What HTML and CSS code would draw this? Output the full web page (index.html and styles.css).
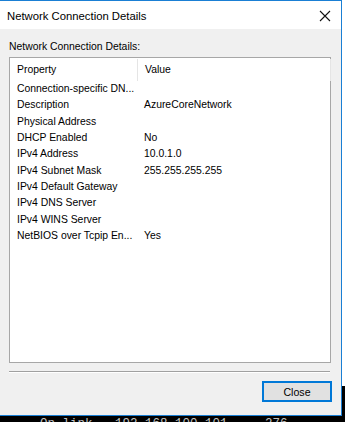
FILE: index.html
```html
<!DOCTYPE html>
<html lang="en">
<head>
  <meta charset="UTF-8" />
  <title>Network Connection Details</title>
  <link rel="stylesheet" href="styles.css">
</head>
<body>
  <div class="screen">
    <div class="top">
      <div class="dialog">
        <div class="titlebar">
          <span class="title">Network Connection Details</span>
          <svg class="close-x" width="12" height="12" viewBox="0 0 12 12">
            <path d="M1 1 L11 11 M11 1 L1 11" stroke="#111" stroke-width="1.1" fill="none"/>
          </svg>
        </div>
        <div class="body">
          <div class="label">Network Connection Details:</div>
          <div class="list">
            <div class="list-head">
              <div class="col-prop">Property</div>
              <div class="col-val">Value</div>
            </div>
            <div class="row"><div class="col-prop">Connection-specific DN...</div><div class="col-val"></div></div>
            <div class="row"><div class="col-prop">Description</div><div class="col-val">AzureCoreNetwork</div></div>
            <div class="row"><div class="col-prop">Physical Address</div><div class="col-val"></div></div>
            <div class="row"><div class="col-prop">DHCP Enabled</div><div class="col-val">No</div></div>
            <div class="row"><div class="col-prop">IPv4 Address</div><div class="col-val">10.0.1.0</div></div>
            <div class="row"><div class="col-prop">IPv4 Subnet Mask</div><div class="col-val">255.255.255.255</div></div>
            <div class="row"><div class="col-prop">IPv4 Default Gateway</div><div class="col-val"></div></div>
            <div class="row"><div class="col-prop">IPv4 DNS Server</div><div class="col-val"></div></div>
            <div class="row"><div class="col-prop">IPv4 WINS Server</div><div class="col-val"></div></div>
            <div class="row"><div class="col-prop">NetBIOS over Tcpip En...</div><div class="col-val">Yes</div></div>
          </div>
          <div class="separator"></div>
          <div class="buttons">
            <button class="btn">Close</button>
          </div>
        </div>
      </div>
      <div class="behind"></div>
    </div>
    <div class="console">On-link   192.168.100.101     276</div>
  </div>
</body>
</html>
```

FILE: styles.css
```css
body {
  margin: 0;
  font-family: 'Liberation Sans', Arial, sans-serif;
  color: #000;
}
.screen {
  width: 345px;
  height: 422px;
  overflow: hidden;
  background: #000;
  display: flex;
  flex-direction: column;
}
.top {
  display: flex;
  height: 416px;
  flex-shrink: 0;
}
.dialog {
  width: 341px;
  border-top: 1px solid #1a7fd4;
  border-right: 1px solid #1a7fd4;
  border-bottom: 1px solid #1a7fd4;
  background: #f0f0f0;
  display: flex;
  flex-direction: column;
}
.titlebar {
  height: 28px;
  background: #fff;
  display: flex;
  align-items: center;
  justify-content: space-between;
  padding: 0 10px 0 7px;
}
.title {
  font-size: 11.3px;
  padding-top: 1px;
}
.close-x {
  margin-top: 1px;
}
.body {
  flex: 1;
  padding: 11px 10px 0 9px;
  font-size: 10.4px;
}
.label {
  height: 14px;
  line-height: 14px;
  margin-bottom: 3px;
}
.list {
  height: 303px;
  padding-top: 1px;
  background: #fff;
  border: 1px solid #a7a7a7;
}
.list-head {
  display: flex;
  height: 22px;
  align-items: center;
}
.list-head .col-prop {
  border-right: 1px solid #e5e5e5;
  height: 22px;
  line-height: 22px;
}
.list-head .col-val {
  border-right: 1px solid #e5e5e5;
  height: 22px;
  line-height: 22px;
  width: 185px;
  flex: none;
}
.row {
  display: flex;
  height: 16.33px;
  line-height: 16.33px;
}
.col-prop {
  width: 120px;
  padding-left: 7px;
  white-space: nowrap;
  flex: none;
}
.col-val {
  padding-left: 7px;
  white-space: nowrap;
}
.separator {
  margin-top: 8px;
  width: 321px;
  border-top: 1px solid #a0a0a0;
  border-bottom: 1px solid #fff;
}
.buttons {
  display: flex;
  justify-content: flex-end;
  margin-top: 8px;
  margin-right: -1px;
}
.btn {
  width: 70px;
  height: 21px;
  padding: 0;
  background: #e1e1e1;
  border: 2px solid #0078d7;
  font-family: 'Liberation Sans', Arial, sans-serif;
  font-size: 10.6px;
  color: #000;
}
.behind {
  flex: 1;
  background: linear-gradient(#fff 0, #fff 386px, #000 386px);
}
.console {
  font-family: 'Liberation Mono', 'Courier New', monospace;
  font-size: 12.5px;
  color: #c0c0c0;
  white-space: pre;
  line-height: 14px;
  padding: 1px 0 0 40px;
}
```
